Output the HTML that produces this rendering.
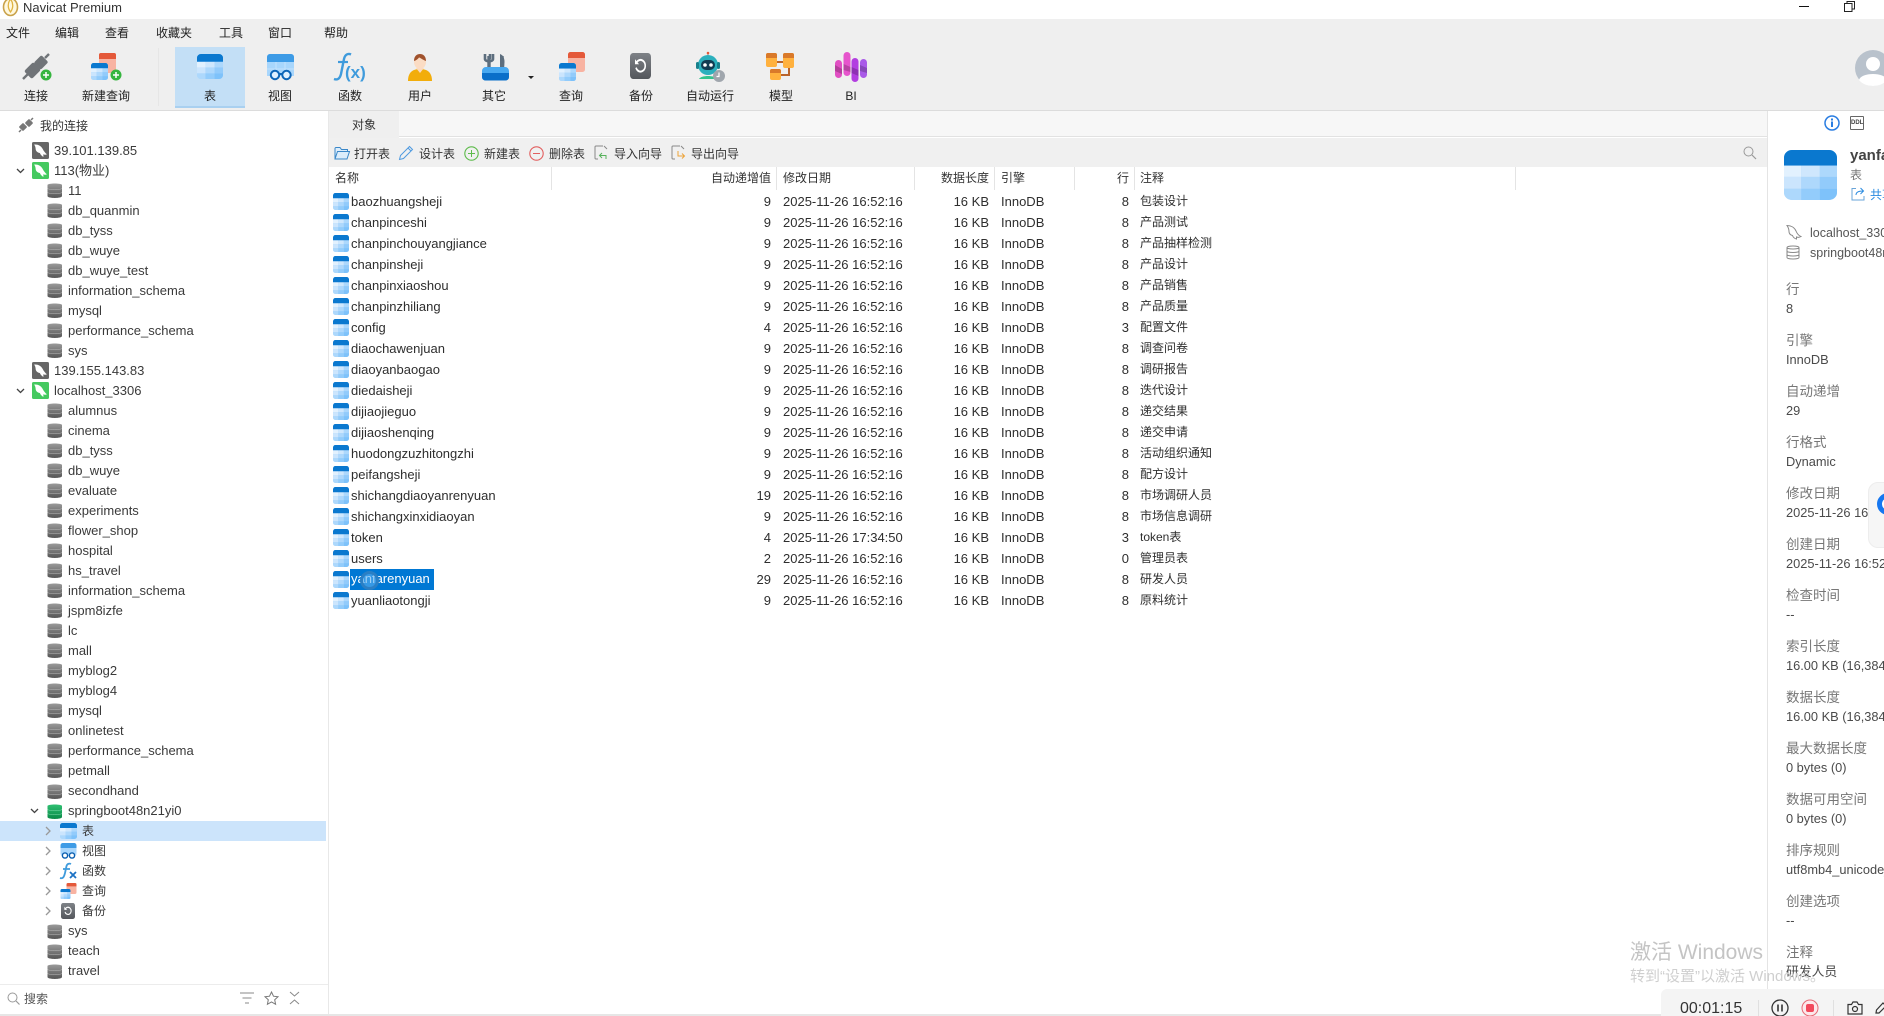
<!DOCTYPE html>
<html lang="zh-CN"><head><meta charset="utf-8"><title>Navicat Premium</title>
<style>
*{box-sizing:border-box}
html,body{margin:0;padding:0;width:1884px;height:1016px;overflow:hidden;background:#fff}
body{position:relative;font-family:"Liberation Sans","Noto Sans CJK SC",sans-serif;font-size:13px;color:#333}
.x{position:absolute;white-space:nowrap}
.z{font-size:12px}
svg{display:block;overflow:visible}
.ab{position:absolute}
.lab{position:absolute;top:87px;width:90px;text-align:center;font-size:12px;line-height:18px;color:#222}
.tr{position:absolute;left:0;top:140.5px;width:326px}
.tr>div{height:20.02px;line-height:20px;padding-left:68px;position:relative;white-space:nowrap;color:#3a3a3a}
.tr>div>svg{position:absolute;left:46.5px;top:1.5px;width:16px;height:17px}
.tr>div.c{padding-left:54px}.tr>div.c>svg{left:32px;width:17px}
.tr>div.s{padding-left:82px;font-size:12px}.tr>div.s>svg{left:60px;width:17px;height:16px}
.tr>div.sel{background:#cce4fb}
.tr>div>svg.ch{left:16px;top:6px;width:9px;height:8px}
.tr>div>svg.ch2{left:30px;top:6px;width:9px;height:8px}
.tr>div>svg.cr{left:45px;top:5px;width:6px;height:10px}
.tb{position:absolute;left:333px;top:190.5px;width:900px}
.tb>div{position:relative;height:21px;line-height:21px;white-space:nowrap;color:#2e2e2e}
.tb svg{position:absolute;left:0;top:2px;width:16px;height:17px}
.tb span{position:absolute}
.n{left:18px}.a{left:378px;width:60px;text-align:right}.d{left:450px}
.sz{left:596px;width:60px;text-align:right}.e{left:668px}.l{left:756px;width:40px;text-align:right}.m{left:807px;font-size:12px}
.hd{position:absolute;top:167px;height:23px;line-height:23px;font-size:12px;color:#333;white-space:nowrap}
.sep{position:absolute;top:167px;height:23px;width:1px;background:#e4e4e4}
.tbtn{position:absolute;top:145px;font-size:12px;line-height:18px;color:#333;white-space:nowrap}
.pn{position:absolute;left:1786px;top:279.5px;width:98px;overflow:hidden}
.pn>div{height:51.05px;white-space:nowrap}
.pn b{display:block;font-weight:normal;font-size:13.5px;line-height:20px;color:#777}
.pn i{display:block;font-style:normal;font-size:12.8px;line-height:19px;margin-top:-1px;color:#4a4a4a}
</style></head><body>

<svg width="0" height="0" style="position:absolute">
<defs>
<linearGradient id="gd" x1="0" y1="0" x2="0" y2="1"><stop offset="0" stop-color="#9a9a9a"/><stop offset="1" stop-color="#555"/></linearGradient>
<linearGradient id="gg" x1="0" y1="0" x2="0" y2="1"><stop offset="0" stop-color="#2fbf72"/><stop offset="1" stop-color="#0a8a48"/></linearGradient>
<linearGradient id="bk" x1="0" y1="0" x2="0" y2="1"><stop offset="0" stop-color="#7e8287"/><stop offset="1" stop-color="#54575c"/></linearGradient>
<symbol id="t" viewBox="0 0 16 16" preserveAspectRatio="none">
<rect width="16" height="16" rx="2.4" fill="#a8d6fc"/>
<path d="M0 5V2.4A2.4 2.4 0 0 1 2.4 0H13.6A2.4 2.4 0 0 1 16 2.4V5Z" fill="#0a78cf"/>
<rect x="0" y="5" width="5.2" height="3.6" fill="#e2f1fe"/><rect x="5.2" y="5" width="5.6" height="3.6" fill="#cfe7fd"/><rect x="10.8" y="5" width="5.2" height="3.6" fill="#add8fc"/>
<rect x="0" y="8.6" width="5.2" height="3.8" fill="#cbe5fd"/><rect x="5.2" y="8.6" width="5.6" height="3.8" fill="#aed8fc"/><rect x="10.8" y="8.6" width="5.2" height="3.8" fill="#92cbfb"/>
<path d="M0 12.4H5.2V16H2.4A2.4 2.4 0 0 1 0 13.6Z" fill="#add8fc"/><rect x="5.2" y="12.4" width="5.6" height="3.6" fill="#93ccfb"/><path d="M10.8 12.4H16V13.6A2.4 2.4 0 0 1 13.6 16H10.8Z" fill="#7ec2fa"/>
</symbol>
<symbol id="db" viewBox="0 0 16 17"><path d="M.5 3C.5 1 15 1 15 3V14C15 16.600 .5 16.600 .5 14Z" fill="url(#gd)"/><path d="M.5 6.500C2 8 13.500 8 15 6.500M.5 10.500C2 12 13.500 12 15 10.500" stroke="#bbb" stroke-width=".5" fill="none"/></symbol>
<symbol id="dbg" viewBox="0 0 16 17"><path d="M.5 3C.5 1 15 1 15 3V14C15 16.600 .5 16.600 .5 14Z" fill="url(#gg)"/><path d="M.5 6.500C2 8 13.500 8 15 6.500M.5 10.500C2 12 13.500 12 15 10.500" stroke="#7fdcab" stroke-width=".5" fill="none"/></symbol>
<symbol id="dol" viewBox="0 0 16 16"><path d="M2 2.5C5 2 8.5 3.5 10 6.5 11 8.5 12.5 10.5 14 11.5 13 12.2 11.6 12 10.6 11.5L10.8 14C9.2 13.4 8 12 7.4 10.4 5.2 10 3.4 8.4 3.4 6.2 3.4 5 2.8 3.6 2 2.5Z" fill="#fff"/></symbol>
<symbol id="cg" viewBox="0 0 16 16"><rect width="16" height="16" rx="1.5" fill="#666"/><use href="#dol" width="16" height="16"/></symbol>
<symbol id="cn" viewBox="0 0 16 16"><rect width="16" height="16" rx="1.5" fill="#45c960"/><use href="#dol" width="16" height="16"/></symbol>
<symbol id="chd" viewBox="0 0 9 8"><path d="M1 2L4.5 5.5 8 2" fill="none" stroke="#444" stroke-width="1.3"/></symbol>
<symbol id="chr" viewBox="0 0 6 10"><path d="M1 1L5 5 1 9" fill="none" stroke="#999" stroke-width="1.3"/></symbol>
<symbol id="vw" viewBox="0 0 16 16"><rect width="16" height="13" rx="2.4" fill="#a8d6fc"/><path d="M0 5V2.4A2.4 2.4 0 0 1 2.4 0H13.6A2.4 2.4 0 0 1 16 2.4V5Z" fill="#3d9be6"/><circle cx="4.5" cy="12.5" r="2.6" fill="#fff" stroke="#0a5fb0" stroke-width="1.4"/><circle cx="11.5" cy="12.5" r="2.6" fill="#fff" stroke="#0a5fb0" stroke-width="1.4"/></symbol>
<symbol id="qr" viewBox="0 0 16 16"><rect x="6" y="0" width="10" height="11" rx="1.6" fill="#f8b3a2"/><path d="M6 3.4V1.6A1.6 1.6 0 0 1 7.6 0H14.4A1.6 1.6 0 0 1 16 1.6V3.4Z" fill="#e4593a"/><use href="#t" x="0" y="6" width="10" height="10"/></symbol>
<symbol id="bu" viewBox="0 0 16 16" preserveAspectRatio="none"><rect width="16" height="16" rx="2.4" fill="url(#bk)"/><path d="M4.8 6.2A3.6 3.6 0 1 1 4.6 9" fill="none" stroke="#fff" stroke-width="1.2"/><path d="M3.8 3.8V6.9H6.9" fill="#fff"/></symbol>
</defs></svg>

<!-- title bar -->
<svg class="ab" style="left:2px;top:-4px" width="17" height="22" viewBox="0 0 17 22"><ellipse cx="8.5" cy="11" rx="7" ry="8.5" fill="#fff8df" stroke="#c9a24a" stroke-width="1.6"/><path d="M8.5 3C5.5 7 5.5 12 8.5 16 11.5 12 11.5 7 8.5 3Z" fill="none" stroke="#e0b443" stroke-width="1.3"/></svg>
<div class="x" style="left:23px;top:-1px;line-height:17px;font-size:13px;color:#333">Navicat Premium</div>
<div class="ab" style="left:1799px;top:6px;width:10px;height:1px;background:#111"></div>
<svg class="ab" style="left:1844px;top:1px" width="11" height="11" viewBox="0 0 11 11"><rect x=".5" y="2.5" width="7.5" height="8" fill="#fff" stroke="#222"/><path d="M3 2.5V.5H10.5V8H8" fill="none" stroke="#222"/></svg>

<!-- menu + toolbar -->
<div class="ab" style="left:0;top:19px;width:1884px;height:92px;background:#efefef;border-bottom:1px solid #dcdcdc"></div>
<div class="x z" style="left:6px;top:24px;color:#222">文件</div>
<div class="x z" style="left:55px;top:24px;color:#222">编辑</div>
<div class="x z" style="left:105px;top:24px;color:#222">查看</div>
<div class="x z" style="left:156px;top:24px;color:#222">收藏夹</div>
<div class="x z" style="left:219px;top:24px;color:#222">工具</div>
<div class="x z" style="left:268px;top:24px;color:#222">窗口</div>
<div class="x z" style="left:324px;top:24px;color:#222">帮助</div>
<div class="ab" style="left:158px;top:48px;width:1px;height:58px;background:#e6e6e6"></div>
<div class="ab" style="left:175px;top:47px;width:70px;height:61px;background:#c3dff6;border-bottom:2px solid #a9d0f0"></div>

<svg class="ab" style="left:21px;top:53px" width="32" height="28" viewBox="0 0 32 28"><g fill="#707478"><path d="M2 26L7 21" stroke="#707478" stroke-width="2.4"/><rect x="6" y="11" width="11" height="13" rx="2" transform="rotate(45 11.5 17.5)"/><rect x="15" y="4" width="10" height="11" rx="2" transform="rotate(45 20 9.5)"/><path d="M24 5L28 1" stroke="#707478" stroke-width="2.4"/></g><circle cx="25" cy="22" r="5.5" fill="#35b53f"/><path d="M25 19V25M22 22H28" stroke="#fff" stroke-width="1.5"/></svg>
<svg class="ab" style="left:91px;top:53px" width="32" height="28" viewBox="0 0 32 28"><rect x="8" y="0" width="17" height="20" rx="2" fill="#f8b3a2"/><path d="M8 6V2A2 2 0 0 1 10 0H23A2 2 0 0 1 25 2V6Z" fill="#e4593a"/><use href="#t" x="0" y="10" width="17" height="17"/><circle cx="25" cy="22" r="5.5" fill="#35b53f"/><path d="M25 19V25M22 22H28" stroke="#fff" stroke-width="1.5"/></svg>
<svg class="ab" style="left:197px;top:54px;width:26px;height:25px"><use href="#t" width="26" height="25"/></svg>
<svg class="ab" style="left:267px;top:54px" width="27" height="27" viewBox="0 0 27 27"><path d="M0 3A3 3 0 0 1 3 0H24A3 3 0 0 1 27 3V22H0Z" fill="#a8d6fc"/><path d="M0 8V3A3 3 0 0 1 3 0H24A3 3 0 0 1 27 3V8Z" fill="#3d9be6"/><path d="M0 15H27M9 8V22M18 8V22" stroke="#c4e2fc" stroke-width="1"/><circle cx="8" cy="21" r="4.2" fill="#dff0ff" stroke="#0d65b8" stroke-width="2"/><circle cx="19.500" cy="21" r="4.2" fill="#dff0ff" stroke="#0d65b8" stroke-width="2"/><path d="M12 20H15.500" stroke="#0d65b8" stroke-width="2"/></svg>
<svg class="ab" style="left:334px;top:53px" width="34" height="28" viewBox="0 0 34 28"><path d="M0 26C4 27.500 6 25 7 21L10 6C11 1.500 14 0 17 1.500" fill="none" stroke="#3f9bdc" stroke-width="2.400"/><path d="M4 9H14" stroke="#3f9bdc" stroke-width="2.200"/><text x="11" y="25" font-family="'Liberation Sans',sans-serif" font-size="17" font-weight="bold" fill="#3f9bdc">(x)</text></svg>
<svg class="ab" style="left:408px;top:54px" width="24" height="27" viewBox="0 0 24 27"><path d="M0 27C0 18 5 15 12 15S24 18 24 27Z" fill="#f2ad0b"/><path d="M8 14H16L12 19Z" fill="#fbd9bf"/><ellipse cx="12" cy="8" rx="6" ry="7" fill="#fbdcc4"/><path d="M6 7C6 2 9 0 12 0S18 2 18 7C15 6 12 3.500 11 3.500 10 5 8 6.500 6 7Z" fill="#a0522d"/></svg>
<svg class="ab" style="left:482px;top:53px" width="27" height="28" viewBox="0 0 27 28"><path d="M7 3V22M20 3V22" stroke="#5d6e7e" stroke-width="3.400"/><path d="M3 1V6C3 9 11 9 11 6V1M8 1V6" fill="none" stroke="#5d6e7e" stroke-width="2.600"/><path d="M18 18V1C21 2 22.500 5 22.500 9L22 18Z" fill="#5d6e7e"/><path d="M0 18A4 4 0 0 1 4 14H23A4 4 0 0 1 27 18V24A3.500 3.500 0 0 1 23.500 27.500H3.500A3.500 3.500 0 0 1 0 24Z" fill="#47a8f0"/><path d="M0 20H27V24A3.500 3.500 0 0 1 23.500 27.500H3.500A3.500 3.500 0 0 1 0 24Z" fill="#0a6fc9"/></svg>
<svg class="ab" style="left:528px;top:76px" width="6" height="3" viewBox="0 0 6 3"><path d="M0 0H6L3 3Z" fill="#222"/></svg>
<svg class="ab" style="left:559px;top:52px;width:26px;height:29px" viewBox="0 0 26 29"><rect x="9" y="0" width="17" height="20" rx="2.500" fill="#f8b3a2"/><path d="M9 6V2.500A2.500 2.500 0 0 1 11.500 0H23.500A2.500 2.500 0 0 1 26 2.500V6Z" fill="#e4593a"/><use href="#t" x="0" y="11" width="17" height="18"/></svg>
<svg class="ab" style="left:630px;top:53px;width:21px;height:26px"><use href="#bu" width="21" height="26"/></svg>
<svg class="ab" style="left:695px;top:52px" width="32" height="30" viewBox="0 0 32 30"><path d="M13 0V5" stroke="#888" stroke-width="1"/><circle cx="13" cy="1" r="1.300" fill="#e4593a"/><circle cx="13" cy="13" r="10" fill="#2cb0bd"/><rect x="1" y="10" width="3" height="7" rx="1.500" fill="#17808c"/><rect x="22" y="10" width="3" height="7" rx="1.500" fill="#17808c"/><rect x="6" y="8" width="14" height="10" rx="5" fill="#113c52"/><circle cx="10" cy="13" r="1.800" fill="#fff"/><circle cx="16" cy="13" r="1.800" fill="#fff"/><path d="M4 27C6 23 20 23 22 27Z" fill="#34c48e"/><circle cx="24" cy="24" r="6" fill="#a0a6ad"/><path d="M24 20.500V24.500H21.500" fill="none" stroke="#fff" stroke-width="1.200"/></svg>
<svg class="ab" style="left:766px;top:53px" width="28" height="27" viewBox="0 0 28 27"><path d="M10 9H18M23 12V22H15" fill="none" stroke="#b9632b" stroke-width="2"/><rect x="0" y="0" width="11" height="14" rx="2" fill="#ffb13e"/><path d="M0 5V2A2 2 0 0 1 2 0H9A2 2 0 0 1 11 2V5Z" fill="#d9792a"/><rect x="17" y="0" width="11" height="15" rx="2" fill="#ffb13e"/><path d="M17 5V2A2 2 0 0 1 19 0H26A2 2 0 0 1 28 2V5Z" fill="#d9792a"/><rect x="4" y="16" width="11" height="11" rx="2" fill="#ffb13e"/><path d="M4 20V18A2 2 0 0 1 6 16H13A2 2 0 0 1 15 18V20Z" fill="#d9792a"/></svg>
<svg class="ab" style="left:835px;top:52px" width="32" height="30" viewBox="0 0 32 30"><rect x="0" y="9" width="7" height="18" rx="3.500" transform="translate(0 -1)" fill="#e14fc3"/><rect x="8.500" y="0" width="7" height="24" rx="3.500" fill="#e655cc"/><rect x="16.500" y="6" width="7" height="24" rx="3.500" fill="#b23ee0"/><rect x="25" y="7" width="7" height="19" rx="3.500" fill="#a95ae8"/><path d="M0 13L7 17V22L0 19ZM8.500 12L15.500 15V20L8.500 18ZM16.500 15L23.500 18V24L16.500 21ZM25 13L32 16V21L25 19Z" fill="#000" opacity=".2"/></svg>
<svg class="ab" style="left:1853px;top:50px;width:31px;height:37px" viewBox="0 0 31 37"><circle cx="20" cy="18" r="18" fill="#b9c2cc"/><circle cx="20" cy="14" r="7" fill="#fff"/><path d="M6 30C8 22 32 22 34 30 28 38 12 38 6 30Z" fill="#fff"/></svg>

<div class="lab" style="left:-9px">连接</div>
<div class="lab" style="left:61px">新建查询</div>
<div class="lab" style="left:165px">表</div>
<div class="lab" style="left:235px">视图</div>
<div class="lab" style="left:305px">函数</div>
<div class="lab" style="left:375px">用户</div>
<div class="lab" style="left:449px">其它</div>
<div class="lab" style="left:526px">查询</div>
<div class="lab" style="left:596px">备份</div>
<div class="lab" style="left:665px">自动运行</div>
<div class="lab" style="left:736px">模型</div>
<div class="lab" style="left:806px">BI</div>

<!-- sidebar -->
<div class="ab" style="left:328px;top:111px;width:1px;height:903px;background:#e8e8e8"></div>
<svg class="ab" style="left:18px;top:117px" width="16" height="16" viewBox="0 0 16 16"><g fill="#777"><rect x="2" y="7" width="6" height="6" rx="1" transform="rotate(45 5 10)"/><rect x="8" y="3" width="6" height="6" rx="1" transform="rotate(45 11 6)"/><path d="M1 15L3 13M13 3L15 1" stroke="#777" stroke-width="1.500"/></g></svg>
<div class="x z" style="left:40px;top:117px;color:#333">我的连接</div>
<div class="tr">
<div class="c"><svg><use href="#cg"/></svg>39.101.139.85</div>
<div class="c"><svg class="ch"><use href="#chd"/></svg><svg><use href="#cn"/></svg>113(物业)</div>
<div><svg><use href="#db"/></svg>11</div>
<div><svg><use href="#db"/></svg>db_quanmin</div>
<div><svg><use href="#db"/></svg>db_tyss</div>
<div><svg><use href="#db"/></svg>db_wuye</div>
<div><svg><use href="#db"/></svg>db_wuye_test</div>
<div><svg><use href="#db"/></svg>information_schema</div>
<div><svg><use href="#db"/></svg>mysql</div>
<div><svg><use href="#db"/></svg>performance_schema</div>
<div><svg><use href="#db"/></svg>sys</div>
<div class="c"><svg><use href="#cg"/></svg>139.155.143.83</div>
<div class="c"><svg class="ch"><use href="#chd"/></svg><svg><use href="#cn"/></svg>localhost_3306</div>
<div><svg><use href="#db"/></svg>alumnus</div>
<div><svg><use href="#db"/></svg>cinema</div>
<div><svg><use href="#db"/></svg>db_tyss</div>
<div><svg><use href="#db"/></svg>db_wuye</div>
<div><svg><use href="#db"/></svg>evaluate</div>
<div><svg><use href="#db"/></svg>experiments</div>
<div><svg><use href="#db"/></svg>flower_shop</div>
<div><svg><use href="#db"/></svg>hospital</div>
<div><svg><use href="#db"/></svg>hs_travel</div>
<div><svg><use href="#db"/></svg>information_schema</div>
<div><svg><use href="#db"/></svg>jspm8izfe</div>
<div><svg><use href="#db"/></svg>lc</div>
<div><svg><use href="#db"/></svg>mall</div>
<div><svg><use href="#db"/></svg>myblog2</div>
<div><svg><use href="#db"/></svg>myblog4</div>
<div><svg><use href="#db"/></svg>mysql</div>
<div><svg><use href="#db"/></svg>onlinetest</div>
<div><svg><use href="#db"/></svg>performance_schema</div>
<div><svg><use href="#db"/></svg>petmall</div>
<div><svg><use href="#db"/></svg>secondhand</div>
<div><svg class="ch2"><use href="#chd"/></svg><svg><use href="#dbg"/></svg>springboot48n21yi0</div>
<div class="s sel"><svg class="cr"><use href="#chr"/></svg><svg><use href="#t"/></svg>表</div>
<div class="s"><svg class="cr"><use href="#chr"/></svg><svg><use href="#vw"/></svg>视图</div>
<div class="s"><svg class="cr"><use href="#chr"/></svg><svg viewBox="0 0 17 16"><path d="M0 15C3 16 4 14 5 10L6.500 3C7 1 9 0 11 1M3 6H10" fill="none" stroke="#3f9bdc" stroke-width="1.800"/><path d="M10 9L16 15M16 9L10 15" stroke="#1c72c4" stroke-width="1.800"/></svg>函数</div>
<div class="s"><svg class="cr"><use href="#chr"/></svg><svg><use href="#qr"/></svg>查询</div>
<div class="s"><svg class="cr"><use href="#chr"/></svg><svg style="width:14px;height:16px;left:61px"><use href="#bu" width="14" height="16"/></svg>备份</div>
<div><svg><use href="#db"/></svg>sys</div>
<div><svg><use href="#db"/></svg>teach</div>
<div><svg><use href="#db"/></svg>travel</div>
</div>

<!-- sidebar footer -->
<div class="ab" style="left:0;top:984px;width:328px;height:1px;background:#ececec"></div>
<div class="ab" style="left:0;top:1014px;width:1884px;height:2px;background:#e6e6e6"></div>
<svg class="ab" style="left:7px;top:992px" width="13" height="13" viewBox="0 0 13 13"><circle cx="5.500" cy="5.500" r="4.500" fill="none" stroke="#999"/><path d="M9 9L12.500 12.500" stroke="#999" stroke-width="1.200"/></svg>
<div class="x z" style="left:24px;top:990px;color:#555">搜索</div>
<svg class="ab" style="left:240px;top:992px" width="14" height="12" viewBox="0 0 14 12"><path d="M0 1H14M2.500 6H11.500M5 11H9" stroke="#888"/></svg>
<svg class="ab" style="left:264px;top:991px" width="15" height="14" viewBox="0 0 15 14"><path d="M7.500 1L9.500 5.200 14 5.700 10.700 8.800 11.600 13.300 7.500 11 3.400 13.300 4.300 8.800 1 5.700 5.500 5.200Z" fill="none" stroke="#777"/></svg>
<svg class="ab" style="left:288px;top:991px" width="13" height="14" viewBox="0 0 13 14"><path d="M2 1L6.500 5 11 1M2 13L6.500 9 11 13" fill="none" stroke="#888"/></svg>

<!-- tab row -->
<div class="ab" style="left:329px;top:111px;width:1438px;height:26px;background:#f7f7f7;border-bottom:1px solid #e2e2e2"></div>
<div class="ab" style="left:329px;top:111px;width:70px;height:27px;background:#efefef"></div>
<div class="x z" style="left:352px;top:116px;color:#333">对象</div>

<!-- object toolbar -->
<div class="ab" style="left:329px;top:138px;width:1438px;height:29px;background:#f0f0f0"></div>
<svg class="ab" style="left:334px;top:146px" width="16" height="14" viewBox="0 0 16 14"><path d="M1 13V2.500A1 1 0 0 1 2 1.500H6L7.500 3.500H13.500V5.500M1 13L3.500 5.500H15.500L13 13Z" fill="#dcedfb" stroke="#3a87c8"/></svg>
<div class="tbtn" style="left:354px">打开表</div>
<svg class="ab" style="left:398px;top:145px" width="16" height="16" viewBox="0 0 16 16"><path d="M1.500 14.500L2.500 10.500 11.500 1.500 14.500 4.500 5.500 13.500ZM10 3L13 6" fill="none" stroke="#4e9ae0"/></svg>
<div class="tbtn" style="left:419px">设计表</div>
<svg class="ab" style="left:464px;top:146px" width="15" height="15" viewBox="0 0 15 15"><circle cx="7.500" cy="7.500" r="6.700" fill="none" stroke="#5dbb4a" stroke-width="1.100"/><path d="M7.500 4V11M4 7.500H11" stroke="#5dbb4a"/></svg>
<div class="tbtn" style="left:484px">新建表</div>
<svg class="ab" style="left:529px;top:146px" width="15" height="15" viewBox="0 0 15 15"><circle cx="7.500" cy="7.500" r="6.700" fill="none" stroke="#e25f5f" stroke-width="1.100"/><path d="M4 7.500H11" stroke="#e25f5f"/></svg>
<div class="tbtn" style="left:549px">删除表</div>
<svg class="ab" style="left:594px;top:145px" width="16" height="16" viewBox="0 0 16 16"><path d="M9 1H2A1 1 0 0 0 1 2V13A1 1 0 0 0 2 14H4" fill="none" stroke="#888"/><path d="M10 1L13 4" stroke="#888"/><path d="M8 8L5.500 10.500 8 13M6 10.500H12V14" fill="none" stroke="#57b25c"/></svg>
<div class="tbtn" style="left:614px">导入向导</div>
<svg class="ab" style="left:671px;top:145px" width="16" height="16" viewBox="0 0 16 16"><path d="M9 1H2A1 1 0 0 0 1 2V13A1 1 0 0 0 2 14H4" fill="none" stroke="#888"/><path d="M10 1L13 4" stroke="#888"/><path d="M7 6V11H13M11 8.500L13.500 11 11 13.500" fill="none" stroke="#eda43a"/></svg>
<div class="tbtn" style="left:691px">导出向导</div>
<svg class="ab" style="left:1743px;top:146px" width="14" height="14" viewBox="0 0 14 14"><circle cx="5.500" cy="5.500" r="4.500" fill="none" stroke="#999"/><path d="M9 9L13 13" stroke="#999" stroke-width="1.200"/></svg>

<!-- headers -->
<div class="hd" style="left:335px">名称</div>
<div class="sep" style="left:551px"></div>
<div class="hd" style="left:700px;width:71px;text-align:right">自动递增值</div>
<div class="sep" style="left:776px"></div>
<div class="hd" style="left:783px">修改日期</div>
<div class="sep" style="left:914px"></div>
<div class="hd" style="left:930px;width:59px;text-align:right">数据长度</div>
<div class="sep" style="left:994px"></div>
<div class="hd" style="left:1001px">引擎</div>
<div class="sep" style="left:1074px"></div>
<div class="hd" style="left:1100px;width:29px;text-align:right">行</div>
<div class="sep" style="left:1134px"></div>
<div class="hd" style="left:1140px">注释</div>
<div class="sep" style="left:1515px"></div>

<!-- table -->
<div class="tb">
<div><svg><use href="#t"/></svg><span class="n">baozhuangsheji</span><span class="a">9</span><span class="d">2025-11-26 16:52:16</span><span class="sz">16 KB</span><span class="e">InnoDB</span><span class="l">8</span><span class="m">包装设计</span></div>
<div><svg><use href="#t"/></svg><span class="n">chanpinceshi</span><span class="a">9</span><span class="d">2025-11-26 16:52:16</span><span class="sz">16 KB</span><span class="e">InnoDB</span><span class="l">8</span><span class="m">产品测试</span></div>
<div><svg><use href="#t"/></svg><span class="n">chanpinchouyangjiance</span><span class="a">9</span><span class="d">2025-11-26 16:52:16</span><span class="sz">16 KB</span><span class="e">InnoDB</span><span class="l">8</span><span class="m">产品抽样检测</span></div>
<div><svg><use href="#t"/></svg><span class="n">chanpinsheji</span><span class="a">9</span><span class="d">2025-11-26 16:52:16</span><span class="sz">16 KB</span><span class="e">InnoDB</span><span class="l">8</span><span class="m">产品设计</span></div>
<div><svg><use href="#t"/></svg><span class="n">chanpinxiaoshou</span><span class="a">9</span><span class="d">2025-11-26 16:52:16</span><span class="sz">16 KB</span><span class="e">InnoDB</span><span class="l">8</span><span class="m">产品销售</span></div>
<div><svg><use href="#t"/></svg><span class="n">chanpinzhiliang</span><span class="a">9</span><span class="d">2025-11-26 16:52:16</span><span class="sz">16 KB</span><span class="e">InnoDB</span><span class="l">8</span><span class="m">产品质量</span></div>
<div><svg><use href="#t"/></svg><span class="n">config</span><span class="a">4</span><span class="d">2025-11-26 16:52:16</span><span class="sz">16 KB</span><span class="e">InnoDB</span><span class="l">3</span><span class="m">配置文件</span></div>
<div><svg><use href="#t"/></svg><span class="n">diaochawenjuan</span><span class="a">9</span><span class="d">2025-11-26 16:52:16</span><span class="sz">16 KB</span><span class="e">InnoDB</span><span class="l">8</span><span class="m">调查问卷</span></div>
<div><svg><use href="#t"/></svg><span class="n">diaoyanbaogao</span><span class="a">9</span><span class="d">2025-11-26 16:52:16</span><span class="sz">16 KB</span><span class="e">InnoDB</span><span class="l">8</span><span class="m">调研报告</span></div>
<div><svg><use href="#t"/></svg><span class="n">diedaisheji</span><span class="a">9</span><span class="d">2025-11-26 16:52:16</span><span class="sz">16 KB</span><span class="e">InnoDB</span><span class="l">8</span><span class="m">迭代设计</span></div>
<div><svg><use href="#t"/></svg><span class="n">dijiaojieguo</span><span class="a">9</span><span class="d">2025-11-26 16:52:16</span><span class="sz">16 KB</span><span class="e">InnoDB</span><span class="l">8</span><span class="m">递交结果</span></div>
<div><svg><use href="#t"/></svg><span class="n">dijiaoshenqing</span><span class="a">9</span><span class="d">2025-11-26 16:52:16</span><span class="sz">16 KB</span><span class="e">InnoDB</span><span class="l">8</span><span class="m">递交申请</span></div>
<div><svg><use href="#t"/></svg><span class="n">huodongzuzhitongzhi</span><span class="a">9</span><span class="d">2025-11-26 16:52:16</span><span class="sz">16 KB</span><span class="e">InnoDB</span><span class="l">8</span><span class="m">活动组织通知</span></div>
<div><svg><use href="#t"/></svg><span class="n">peifangsheji</span><span class="a">9</span><span class="d">2025-11-26 16:52:16</span><span class="sz">16 KB</span><span class="e">InnoDB</span><span class="l">8</span><span class="m">配方设计</span></div>
<div><svg><use href="#t"/></svg><span class="n">shichangdiaoyanrenyuan</span><span class="a">19</span><span class="d">2025-11-26 16:52:16</span><span class="sz">16 KB</span><span class="e">InnoDB</span><span class="l">8</span><span class="m">市场调研人员</span></div>
<div><svg><use href="#t"/></svg><span class="n">shichangxinxidiaoyan</span><span class="a">9</span><span class="d">2025-11-26 16:52:16</span><span class="sz">16 KB</span><span class="e">InnoDB</span><span class="l">8</span><span class="m">市场信息调研</span></div>
<div><svg><use href="#t"/></svg><span class="n">token</span><span class="a">4</span><span class="d">2025-11-26 17:34:50</span><span class="sz">16 KB</span><span class="e">InnoDB</span><span class="l">3</span><span class="m">token表</span></div>
<div><svg><use href="#t"/></svg><span class="n">users</span><span class="a">2</span><span class="d">2025-11-26 16:52:16</span><span class="sz">16 KB</span><span class="e">InnoDB</span><span class="l">0</span><span class="m">管理员表</span></div>
<div><svg><use href="#t"/></svg><span class="n" style="left:17px;top:0;height:21px;width:84px;padding-left:1px;line-height:20px;background:#0078d4;color:#fff">yanfarenyuan</span><span class="a">29</span><span class="d">2025-11-26 16:52:16</span><span class="sz">16 KB</span><span class="e">InnoDB</span><span class="l">8</span><span class="m">研发人员</span></div>
<div><svg><use href="#t"/></svg><span class="n">yuanliaotongji</span><span class="a">9</span><span class="d">2025-11-26 16:52:16</span><span class="sz">16 KB</span><span class="e">InnoDB</span><span class="l">8</span><span class="m">原料统计</span></div>
</div>
<div class="ab" style="left:360px;top:571px;width:19px;height:19px;border-radius:50%;background:rgba(90,175,240,.6);border:3px solid #2b7fc4"></div>

<!-- right panel -->
<div class="ab" style="left:1767px;top:111px;width:1px;height:903px;background:#e4e4e4"></div>
<svg class="ab" style="left:1824px;top:115px" width="16" height="16" viewBox="0 0 16 16"><circle cx="8" cy="8" r="7" fill="#fff" stroke="#2a7de1" stroke-width="1.500"/><rect x="7" y="6.500" width="2" height="5.500" fill="#2a7de1"/><rect x="7" y="3.500" width="2" height="2" fill="#2a7de1"/></svg>
<div class="ab" style="left:1850px;top:116px;width:14px;height:14px;border:1px solid #666;font-size:6px;line-height:12px;text-align:center;font-weight:bold;color:#444;border-radius:1px">DDL</div>
<svg class="ab" style="left:1784px;top:150px;width:53px;height:50px"><use href="#t" width="53" height="50"/></svg>
<div class="x" style="left:1850px;top:147px;font-size:15px;font-weight:bold;line-height:18px;color:#444;width:34px;overflow:hidden">yanfarenyuan</div>
<div class="x" style="left:1850px;top:167px;font-size:12px;line-height:16px;color:#777">表</div>
<svg class="ab" style="left:1851px;top:187px" width="14" height="14" viewBox="0 0 14 14"><path d="M5 1.500H1V13H13V9" fill="none" stroke="#6aa4d8"/><path d="M5 8C5 5 8 4 12 4M9.500 1L12.500 4 9.500 7" fill="none" stroke="#2a8be0"/></svg>
<div class="x z" style="left:1870px;top:186px;color:#2a8be0">共享</div>
<svg class="ab" style="left:1786px;top:224px" width="16" height="16" viewBox="0 0 16 16"><path d="M1 1.500C5 1.500 8.500 3.500 10 7 11 9.500 12.500 11.500 15 12.500 13.500 13.500 12 13.500 10.500 13L10.500 15C8.500 14.500 7 13 6.500 11.500 4.500 11 3 9.500 3 7.500 3 5 2 3 1 1.500Z" fill="none" stroke="#8a8a8a"/></svg>
<div class="x" style="left:1810px;top:225px;width:74px;overflow:hidden;color:#555;font-size:12.500px;line-height:16px">localhost_3306</div>
<svg class="ab" style="left:1786px;top:245px" width="14" height="15" viewBox="0 0 14 15"><path d="M1 2.500C1 .500 13 .500 13 2.500V12.500C13 14.500 1 14.500 1 12.500ZM1 2.500C1 4.500 13 4.500 13 2.500M1 6C1 8 13 8 13 6M1 9.500C1 11.500 13 11.500 13 9.500" fill="none" stroke="#8a8a8a"/></svg>
<div class="x" style="left:1810px;top:245px;width:74px;overflow:hidden;color:#555;font-size:12.500px;line-height:16px">springboot48n21yi0</div>

<div class="pn">
<div><b>行</b><i>8</i></div>
<div><b>引擎</b><i>InnoDB</i></div>
<div><b>自动递增</b><i>29</i></div>
<div><b>行格式</b><i>Dynamic</i></div>
<div><b>修改日期</b><i>2025-11-26 16:52:16</i></div>
<div><b>创建日期</b><i>2025-11-26 16:52:16</i></div>
<div><b>检查时间</b><i>--</i></div>
<div><b>索引长度</b><i>16.00 KB (16,384)</i></div>
<div><b>数据长度</b><i>16.00 KB (16,384)</i></div>
<div><b>最大数据长度</b><i>0 bytes (0)</i></div>
<div><b>数据可用空间</b><i>0 bytes (0)</i></div>
<div><b>排序规则</b><i>utf8mb4_unicode_ci</i></div>
<div><b>创建选项</b><i>--</i></div>
<div><b>注释</b><i>研发人员</i></div>
</div>

<!-- floating widget -->
<div class="ab" style="left:1868px;top:482px;width:30px;height:66px;background:#f6f6f6;border-radius:10px;border:1px solid #ededed"></div>
<div class="ab" style="left:1877px;top:493px;width:22px;height:22px;border-radius:50%;border:5px solid #1677f0;background:#fff"></div>

<!-- watermark -->
<div class="x" style="left:1630px;top:940px;font-size:21px;line-height:26px;color:#c4c4c4">激活 Windows</div>
<div class="x" style="left:1630px;top:967px;font-size:15px;line-height:19px;color:#cfcfcf">转到“设置”以激活 Windows。</div>

<!-- record bar -->
<div class="ab" style="left:1661px;top:989px;width:223px;height:27px;background:#f4f4f4;border-radius:6px 0 0 0"></div>
<div class="x" style="left:1680px;top:999px;font-size:16px;line-height:19px;color:#333">00:01:15</div>
<div class="ab" style="left:1758px;top:1000px;width:1px;height:16px;background:#e0e0e0"></div>
<div class="ab" style="left:1833px;top:1000px;width:1px;height:16px;background:#e0e0e0"></div>
<svg class="ab" style="left:1771px;top:999px" width="18" height="18" viewBox="0 0 18 18"><circle cx="9" cy="9" r="8" fill="none" stroke="#333" stroke-width="1.300"/><path d="M7 5.500V12.500M11 5.500V12.500" stroke="#333" stroke-width="1.600"/></svg>
<svg class="ab" style="left:1801px;top:999px" width="18" height="18" viewBox="0 0 18 18"><circle cx="9" cy="9" r="8" fill="#fde8ea" stroke="#e66a75" stroke-width="1"/><rect x="5" y="5" width="8" height="8" rx="2" fill="#f2495c"/></svg>
<svg class="ab" style="left:1847px;top:1001px" width="16" height="14" viewBox="0 0 16 14"><path d="M1 3.500H4.500L6 1H10L11.500 3.500H15V13H1Z" fill="none" stroke="#333" stroke-width="1.200"/><circle cx="8" cy="8" r="2.500" fill="none" stroke="#333" stroke-width="1.200"/></svg>
<svg class="ab" style="left:1875px;top:1001px" width="9" height="14" viewBox="0 0 9 14"><path d="M1 12L1.500 9 8 2 11 5 4 12Z" fill="none" stroke="#333" stroke-width="1.200"/></svg>
</body></html>
